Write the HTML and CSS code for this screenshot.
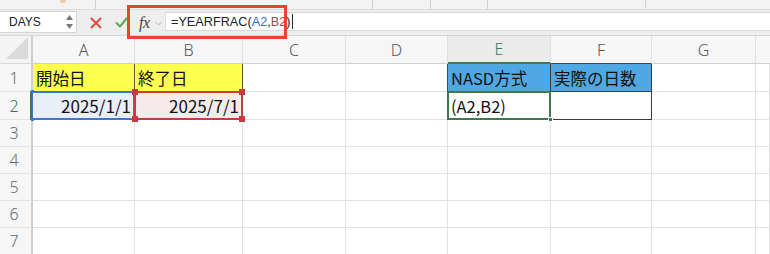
FILE: index.html
```html
<!DOCTYPE html>
<html lang="ja">
<head>
<meta charset="utf-8">
<title>Sheet</title>
<link rel="stylesheet" href="styles.css">
</head>
<body>
<div class="app">
  <div class="ribbon">
    <span class="rb-icon"></span>
    <span class="rb-sep s1"></span>
    <span class="rb-sep s2"></span>
    <span class="rb-sep s3"></span>
    <span class="rb-sep s4"></span>
    <span class="rb-sep s5"></span>
  </div>
  <div class="fbar">
    <div class="namebox">
      <span class="nb-text">DAYS</span>
      <svg class="spin" width="7" height="14" viewBox="0 0 7 14"><polygon points="3.5,0 7,5 0,5" fill="#7a7a7a"/><polygon points="0,9 7,9 3.5,14" fill="#7a7a7a"/></svg>
    </div>
    <div class="actions">
      <svg class="btn-x" width="12" height="12" viewBox="0 0 12 12"><path d="M1.5 1.5 L10.5 10.5 M10.5 1.5 L1.5 10.5" stroke="#df4b3e" stroke-width="2" stroke-linecap="round"/></svg>
      <svg class="btn-ok" width="13" height="11" viewBox="0 0 13 11"><path d="M1.5 6 L5 9.5 L11.5 1.5" stroke="#5aa94f" stroke-width="2" fill="none" stroke-linecap="round" stroke-linejoin="round"/></svg>
    </div>
    <div class="fxbox">
      <span class="fx">fx</span>
      <svg class="chev" width="7" height="5" viewBox="0 0 7 5"><path d="M0.5 0.8 L3.5 4 L6.5 0.8" stroke="#b5b5b5" stroke-width="1" fill="none"/></svg>
    </div>
    <div class="input">=YEARFRAC(<span class="ref-a">A2</span>,<span class="ref-b">B2</span>)<span class="caret"></span></div>
    <div class="hilite"></div>
  </div>
  <div class="sheet">
    <div class="corner"><svg width="22" height="22" viewBox="0 0 22 22"><polygon points="22,0 22,22 0,22" fill="#dadada"/></svg></div>
    <div class="ch">A</div>
    <div class="ch">B</div>
    <div class="ch">C</div>
    <div class="ch">D</div>
    <div class="ch ch-sel">E</div>
    <div class="ch ch-f">F</div>
    <div class="ch">G</div>
    <div class="ch ch-last"></div>

    <div class="rh">1</div>
    <div class="c yellow">開始日</div>
    <div class="c yellow">終了日</div>
    <div class="c"></div>
    <div class="c tl"></div>
    <div class="c blue tb e1">NASD方式</div>
    <div class="c blue tb">実際の日数</div>
    <div class="c"></div>
    <div class="c"></div>

    <div class="rh rh-sel">2</div>
    <div class="c num ref-cell-a">2025/1/1<span class="tick t1"></span><span class="tick t2"></span><span class="tick t3"></span><span class="tick t4"></span></div>
    <div class="c num ref-cell-b">2025/7/1<span class="hdl h1"></span><span class="hdl h2"></span><span class="hdl h3"></span><span class="hdl h4"></span></div>
    <div class="c"></div>
    <div class="c tl"></div>
    <div class="c tb active">(A2,B2)<span class="fill"></span></div>
    <div class="c tb"></div>
    <div class="c"></div>
    <div class="c"></div>

    <div class="rh">3</div><div class="c"></div><div class="c"></div><div class="c"></div><div class="c"></div><div class="c"></div><div class="c"></div><div class="c"></div><div class="c"></div>
    <div class="rh">4</div><div class="c"></div><div class="c"></div><div class="c"></div><div class="c"></div><div class="c"></div><div class="c"></div><div class="c"></div><div class="c"></div>
    <div class="rh">5</div><div class="c"></div><div class="c"></div><div class="c"></div><div class="c"></div><div class="c"></div><div class="c"></div><div class="c"></div><div class="c"></div>
    <div class="rh">6</div><div class="c"></div><div class="c"></div><div class="c"></div><div class="c"></div><div class="c"></div><div class="c"></div><div class="c"></div><div class="c"></div>
    <div class="rh">7</div><div class="c"></div><div class="c"></div><div class="c"></div><div class="c"></div><div class="c"></div><div class="c"></div><div class="c"></div><div class="c"></div>
  </div>
</div>
</body>
</html>
```

FILE: styles.css
```css
* { box-sizing: border-box; }
html, body { margin: 0; padding: 0; background: #fff; }
body { width: 770px; height: 254px; overflow: hidden; font-family: "Noto Sans CJK JP", "Noto Sans", sans-serif; }

.app { width: 770px; height: 254px; display: flex; flex-direction: column; }

.ribbon { height: 10px; background: #f3f3f3; border-bottom: 1px solid #dcdcdc; position: relative; flex: none; }
.rb-sep { position: absolute; top: 0; width: 1px; height: 9px; background: #d2d2d2; }
.s1 { left: 95px; } .s2 { left: 372px; } .s3 { left: 430px; } .s4 { left: 487px; } .s5 { left: 645px; }
.rb-icon { position: absolute; left: 60px; top: 0; width: 6px; height: 3px; background: #f1c9a4; border-radius: 0 0 2px 2px; }

.fbar { height: 26px; flex: none; display: flex; align-items: stretch; background: #eeeeee; position: relative; border-bottom: 1px solid #d6d6d6; }
.namebox { width: 77px; margin: 1px 0 2px 0; background: #fff; border: 1px solid #d4d4d4; border-left: none; display: flex; align-items: center; justify-content: space-between; padding: 0 3px 0 9px; }
.nb-text { font-family: "Liberation Sans", Arial, sans-serif; font-size: 12px; color: #222; }
.spin { display: block; }
.actions { width: 52px; display: flex; align-items: center; gap: 13px; padding-left: 13px; }
.btn-x, .btn-ok { display: block; }
.fxbox { width: 36px; display: flex; align-items: center; padding-left: 10px; gap: 5px; }
.fx { font-family: "Liberation Serif", serif; font-style: italic; font-size: 16px; color: #444; letter-spacing: -0.5px; }
.chev { display: block; margin-top: 2px; }
.input { flex: 1; margin: 2px 0 4px 0; background: #fff; border-top: 1px solid #d8d8d8; border-bottom: 1px solid #d8d8d8; border-left: 1px solid #dedede; padding-left: 5px; font-family: "Liberation Sans", Arial, sans-serif; font-size: 12.7px; color: #222; display: flex; align-items: center; }
.ref-a { color: #2f6fce; }
.ref-b { color: #c0353a; }
.caret { display: inline-block; width: 1px; height: 15px; background: #222; margin-left: 1px; }
.hilite { position: absolute; left: 127px; top: -5px; width: 160px; height: 34px; border: 3px solid #e8432c; }

.sheet { flex: 1; display: grid; grid-template-columns: 33px 102px 108px 103px 102px 103px 101px 104px 1fr; grid-template-rows: 28px 28px 28px 27px 27px 27px 27px 27px; background: #fff; }
.corner { background: #f4f4f4; border-right: 2px solid #cfcfcf; border-bottom: 1px solid #d9d9d9; display: flex; align-items: flex-end; justify-content: flex-end; padding: 0 3px 4px 0; }
.corner svg { display: block; }
.ch { background: #f6f6f6; border-right: 1px solid #e0e0e0; border-bottom: 1px solid #cfcfcf; display: flex; align-items: center; justify-content: center; font-family: "Noto Sans", sans-serif; font-size: 16px; color: #555; font-weight: 300; }
.ch-sel { background: #ebebeb; color: #3e7a4f; border-bottom: 2px solid #3f7a4e; }
.ch-f { border-bottom: 1px solid #444; }
.ch-last { border-right: none; }
.rh { background: #f6f6f6; border-right: 2px solid #cfcfcf; border-bottom: 1px solid #e2e2e2; display: flex; align-items: center; justify-content: center; font-family: "Noto Sans", sans-serif; font-size: 16px; color: #6a6a6a; font-weight: 300; padding-right: 3px; }
.rh-sel { color: #2f7a44; border-right-color: #3e7a4e; }

.c { position: relative; border-right: 1px solid #e1e1e1; border-bottom: 1px solid #e1e1e1; font-size: 16.5px; color: #111; padding-left: 3px; display: flex; align-items: center; white-space: nowrap; }
.yellow { background: #ffff4f; border-right-color: #5b5b2a; border-bottom-color: #d9d94a; }
.blue { background: #4fa8e4; }
.tb { border-right: 1px solid #3a3a3a; border-bottom: 1px solid #3a3a3a; }
.tl { border-right: 1px solid #3a4a3e; }
.num { justify-content: flex-end; padding-right: 3px; font-size: 17px; }

.ref-cell-a { background: #e9eef8; }
.ref-cell-a::after { content: ""; position: absolute; left: -2px; top: -1px; right: -1px; bottom: -1px; border: 2px solid #3a78d4; pointer-events: none; }
.ref-cell-a::before { content: ""; position: absolute; left: -3px; top: -1px; width: 2px; height: 29px; background: #3e7a4e; z-index: 2; }
.tick { position: absolute; width: 3px; height: 3px; background: #3a78d4; z-index: 3; }
.t1 { left: -2px; top: -2px; } .t2 { right: -2px; top: -2px; } .t3 { left: -2px; bottom: -2px; } .t4 { right: -2px; bottom: -2px; }

.ref-cell-b { background: #f6eaea; }
.ref-cell-b::after { content: ""; position: absolute; left: -1px; top: -1px; right: -1px; bottom: -1px; border: 2px solid #c43d42; pointer-events: none; }
.hdl { position: absolute; width: 6px; height: 6px; background: #c43d42; z-index: 3; }
.h1 { left: -3px; top: -3px; } .h2 { right: -3px; top: -3px; } .h3 { left: -3px; bottom: -3px; } .h4 { right: -3px; bottom: -3px; }

.active::after { content: ""; position: absolute; left: -1px; top: -1px; right: -1px; bottom: -1px; border: 2px solid #3e7a4e; pointer-events: none; }
.fill { position: absolute; right: -3px; bottom: -3px; width: 5px; height: 5px; background: #3e7a4e; border: 1px solid #fff; z-index: 3; }
.e1::before { content: ""; position: absolute; left: -1px; top: 0; bottom: -1px; width: 1px; background: #2f5a3c; }
```
